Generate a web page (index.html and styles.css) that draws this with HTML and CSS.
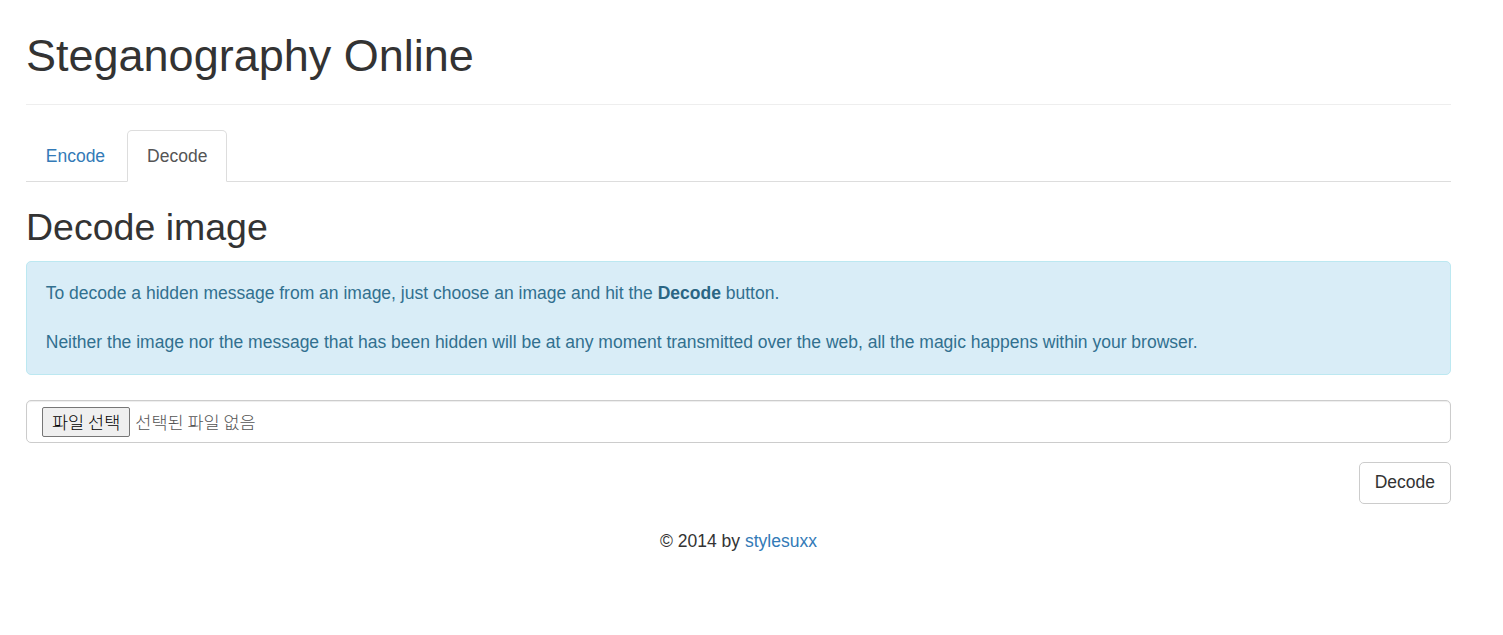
FILE: index.html
```html
<!DOCTYPE html>
<html lang="en">
<head>
    <meta charset="UTF-8">
    <meta name="viewport" content="width=device-width, initial-scale=1.0">
    <link rel="stylesheet" href="styles.css">
    <title>Steganography Online</title>
</head>
<body>
<div class="container">
    <div class="page-header">
        <h1>Steganography Online</h1>
    </div>

    <ul class="nav-tabs">
        <li><a href="#encode">Encode</a></li>
        <li class="active"><a href="#decode">Decode</a></li>
    </ul>

    <div class="tab-content">
        <h2>Decode image</h2>
        <div class="alert">
            To decode a hidden message from an image, just choose an image and hit the <b>Decode</b> button.<br><br>
            Neither the image nor the message that has been hidden will be at any moment transmitted over the web, all the magic happens within your browser.
        </div>

        <div class="form-group">
            <div class="form-control file-input">
                <span class="file-btn">파일 선택</span>
                <span class="file-name">선택된 파일 없음</span>
            </div>
        </div>

        <div class="actions">
            <button type="button" class="btn">Decode</button>
        </div>
    </div>

    <footer class="footer">
        &copy; 2014 by <a href="#">stylesuxx</a>
    </footer>
</div>
</body>
</html>
```
FILE: styles.css
```css
* {
    box-sizing: border-box;
}

body {
    margin: 0;
    font-family: "Liberation Sans", Arial, sans-serif;
    font-size: 17.5px;
    line-height: 25px;
    color: #333;
    background: #fff;
}

a {
    color: #337ab7;
    text-decoration: none;
}

.container {
    width: 1425px;
    margin-left: 26px;
}

.page-header {
    margin: 31px 0 25px;
    padding-bottom: 11px;
    border-bottom: 1px solid #eee;
}

h1 {
    margin: 0 0 12.5px;
    font-size: 45px;
    font-weight: 500;
    line-height: 49.5px;
}

.nav-tabs {
    display: flex;
    margin: 0;
    padding: 0;
    list-style: none;
    border-bottom: 1px solid #ddd;
}

.nav-tabs li {
    margin-right: 2.5px;
    margin-bottom: -1px;
}

.nav-tabs a {
    display: block;
    padding: 12.5px 18.75px;
    border: 1px solid transparent;
    border-radius: 5px 5px 0 0;
}

.nav-tabs .active a {
    color: #555;
    background: #fff;
    border-color: #ddd #ddd transparent;
}

h2 {
    margin: 25px 0 12.5px;
    font-size: 37.5px;
    font-weight: 500;
    line-height: 41.25px;
}

.alert {
    margin-bottom: 25px;
    padding: 19px 18.75px 20px;
    color: #31708f;
    background: #d9edf7;
    border: 1px solid #bce8f1;
    border-radius: 5px;
    line-height: 24.5px;
}

.alert b {
    color: #2b6684;
}

.form-group {
    margin-bottom: 19px;
}

.form-control {
    height: 42.5px;
    padding: 7px 15px;
    border: 1px solid #ccc;
    border-radius: 5px;
    box-shadow: inset 0 1px 1px rgba(0, 0, 0, 0.075);
}

.file-input {
    display: flex;
    align-items: center;
    font-family: "Noto Sans CJK KR", sans-serif;
    font-size: 17.5px;
}

.file-btn {
    display: inline-flex;
    align-items: center;
    height: 30px;
    padding: 0 9px;
    margin-right: 5px;
    color: #000;
    font-weight: 300;
    background: #efefef;
    border: 1px solid #767676;
    border-radius: 2px;
}

.file-name {
    color: #555;
    font-weight: 300;
}

.actions {
    display: flex;
    justify-content: flex-end;
}

.btn {
    height: 42px;
    padding: 7.5px 15px;
    font-family: inherit;
    font-size: 17.5px;
    color: #333;
    background: #fff;
    border: 1px solid #ccc;
    border-radius: 5px;
    cursor: pointer;
}

.footer {
    margin-top: 25px;
    text-align: center;
}
```
